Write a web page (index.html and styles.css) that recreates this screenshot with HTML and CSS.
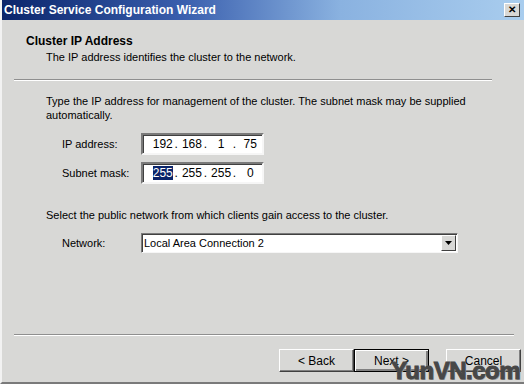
FILE: index.html
```html
<!DOCTYPE html>
<html lang="en">
<head>
    <meta charset="UTF-8">
    <title>Cluster Service Configuration Wizard</title>
    <link rel="stylesheet" href="styles.css">
</head>
<body>
    <div class="window">
        <div class="titlebar">
            <span class="title">Cluster Service Configuration Wizard</span>
            <button class="close-btn">&#x2715;</button>
        </div>

        <div class="header">
            <h1>Cluster IP Address</h1>
            <p>The IP address identifies the cluster to the network.</p>
        </div>
        <hr class="sep">

        <div class="content">
            <p class="intro">Type the IP address for management of the cluster. The subnet mask may be supplied automatically.</p>

            <div class="field">
                <label>IP address:</label>
                <div class="ipbox">
                    <span class="oct">192</span><span class="dot">.</span>
                    <span class="oct">168</span><span class="dot">.</span>
                    <span class="oct">1</span><span class="dot">.</span>
                    <span class="oct">75</span>
                </div>
            </div>
            <div class="field">
                <label>Subnet mask:</label>
                <div class="ipbox">
                    <span class="oct"><span class="sel">255</span></span><span class="dot">.</span>
                    <span class="oct">255</span><span class="dot">.</span>
                    <span class="oct">255</span><span class="dot">.</span>
                    <span class="oct">0</span>
                </div>
            </div>

            <p class="intro second">Select the public network from which clients gain access to the cluster.</p>

            <div class="field">
                <label>Network:</label>
                <div class="combo">
                    <span class="combo-text">Local Area Connection 2</span>
                    <span class="combo-btn">
                        <svg width="7" height="4" viewBox="0 0 7 4"><path d="M0 0h7L3.5 4z" fill="#000"/></svg>
                    </span>
                </div>
            </div>
        </div>

        <hr class="sep bottom">
        <div class="buttons">
            <button class="btn">&lt; Back</button>
            <button class="btn default">Next &gt;</button>
            <button class="btn cancel">Cancel</button>
        </div>
        <div class="watermark">YunVN.com</div>
    </div>
</body>
</html>
```

FILE: styles.css
```css
body {
    margin: 0;
    padding: 0;
    font-family: 'Liberation Sans', Arial, sans-serif;
    font-size: 11px;
    color: #000;
    background: #d8d8d6;
}

.window {
    width: 524px;
    height: 384px;
    box-sizing: border-box;
    background: #d8d8d6;
    border-left: 2px solid #f2f2f2;
    border-bottom: 2px solid #7a7a7a;
    position: relative;
    overflow: hidden;
}

.titlebar {
    height: 20px;
    margin-left: -2px;
    display: flex;
    align-items: center;
    justify-content: space-between;
    padding: 0 4px 0 4px;
    background: linear-gradient(to right, #0a246a 0%, #3a5fae 35%, #8ab2e0 65%, #a9cdee 100%);
}

.title {
    color: #fff;
    font-weight: bold;
    font-size: 12px;
}

.close-btn {
    width: 16px;
    height: 14px;
    padding: 0;
    font-size: 10px;
    font-weight: bold;
    line-height: 10px;
    background: #d8d8d6;
    border: 1px solid;
    border-color: #fff #404040 #404040 #fff;
}

.header {
    padding: 14px 0 0 24px;
}

.header h1 {
    margin: 0;
    font-size: 12px;
    font-weight: bold;
    line-height: 14px;
}

.header p {
    margin: 3px 0 0 20px;
}

.sep {
    margin: 16px 32px 0 12px;
    border: none;
    border-top: 1px solid #8f8f8f;
    border-bottom: 1px solid #fff;
}

.content {
    padding: 13px 0 0 44px;
}

.intro {
    margin: 0;
    width: 450px;
    line-height: 14px;
}

.intro.second {
    margin-top: 24px;
}

.field {
    display: flex;
    align-items: center;
    margin: 7px 0 0 16px;
}

.intro + .field {
    margin-top: 11px;
}

.field label {
    width: 79px;
}

.ipbox {
    width: 123px;
    height: 22px;
    display: flex;
    align-items: center;
    box-sizing: border-box;
    padding-left: 8px;
    background: #fff;
    border: 2px solid;
    border-color: #7a7a7a #f6f6f6 #f6f6f6 #7a7a7a;
    box-shadow: inset 1px 1px 0 #404040;
    font-size: 12px;
}

.oct {
    width: 25px;
    text-align: center;
}

.dot {
    width: 6px;
}

.sel {
    background: #0a246a;
    color: #fff;
}

.combo {
    width: 317px;
    height: 20px;
    display: flex;
    align-items: center;
    justify-content: space-between;
    box-sizing: border-box;
    padding-left: 2px;
    background: #fff;
    border: 1px solid;
    border-color: #7a7a7a #f6f6f6 #f6f6f6 #7a7a7a;
    box-shadow: inset 1px 1px 0 #404040;
}

.combo-btn {
    width: 15px;
    height: 16px;
    margin-right: 1px;
    display: flex;
    align-items: center;
    justify-content: center;
    box-sizing: border-box;
    background: #d8d8d6;
    border: 1px solid;
    border-color: #fff #404040 #404040 #fff;
}

.sep.bottom {
    position: absolute;
    left: 0;
    right: 0;
    top: 334px;
    margin: 0 10px 0 12px;
}

.buttons {
    position: absolute;
    top: 349px;
    right: 3px;
    display: flex;
}

.btn {
    width: 75px;
    height: 23px;
    padding: 0;
    font-family: 'Liberation Sans', Arial, sans-serif;
    font-size: 12px;
    background: #d8d8d6;
    border: 1px solid;
    border-color: #fff #404040 #404040 #fff;
    box-shadow: inset -1px -1px 0 #808080;
}

.btn.default {
    border: 1px solid #000;
    box-shadow: inset 1px 1px 0 #fff, inset -2px -2px 0 #808080;
}

.btn.cancel {
    margin-left: 17px;
}

/* heavy watermark stamped over the corner */
.watermark {
    position: absolute;
    right: 4px;
    bottom: 0;
    font-family: 'Liberation Sans', Arial, sans-serif;
    font-weight: bold;
    font-size: 24px;
    line-height: 22px;
    letter-spacing: -0.5px;
    color: #474747;
    -webkit-text-stroke: 1px #474747;
    text-shadow: 1px 1px 0 #a0a0a0;
}
```
